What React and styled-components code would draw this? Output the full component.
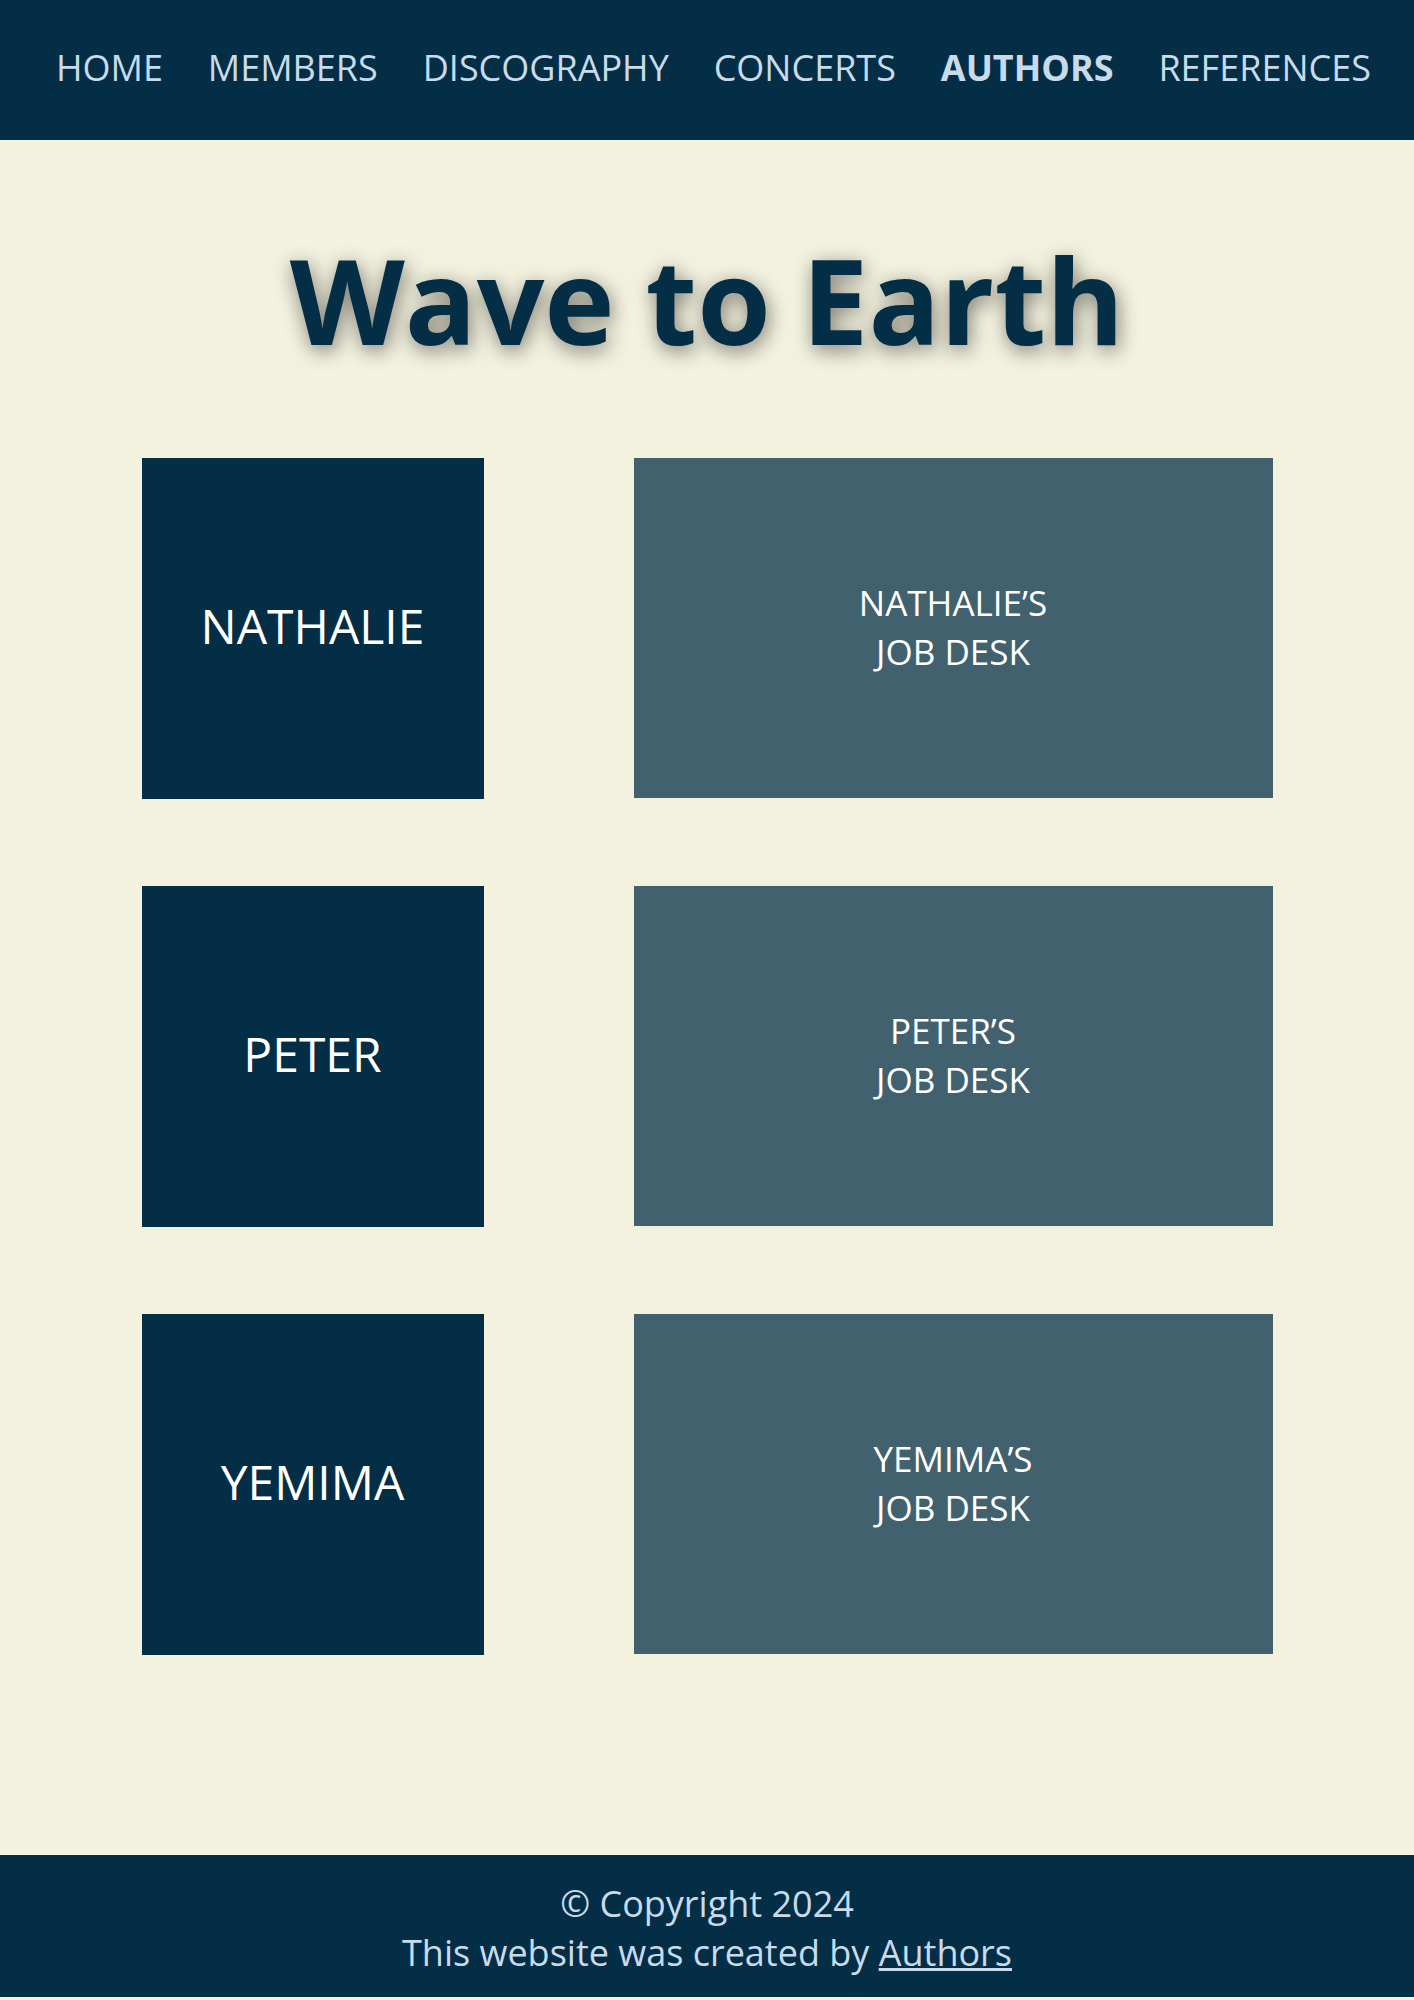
import React from 'react';
import styled, { createGlobalStyle } from 'styled-components';

// Базовые стили страницы

const GlobalStyle = createGlobalStyle`
    * {
        box-sizing: border-box;
    }
    body {
        margin: 0;
        background-color: #f3f2df;
        font-family: "Open Sans", "Noto Sans", sans-serif;
    }
`;

const Nav = styled.nav`
    height: 140px;
    background-color: #032e46;
    display: flex;
    align-items: center;
    justify-content: space-between;
    padding: 0 43px 5px 56px;
`;

const NavLink = styled.a`
    font-size: 36px;
    line-height: 1;
    color: #c9dbea;
    text-decoration: none;
    text-transform: uppercase;
    font-weight: ${props => (props.active ? 700 : 400)};
    cursor: pointer;
`;

const Title = styled.h1`
    margin: 78px 0;
    text-align: center;
    font-size: 119px;
    line-height: 1.362;
    font-weight: 700;
    color: #032e46;
    text-shadow: 2px 5px 20px rgba(0, 0, 0, 0.5);
`;

const Grid = styled.section`
    width: 1131px;
    margin: 0 auto;
    display: grid;
    grid-template-columns: 342px 639px;
    grid-auto-rows: 341px;
    justify-content: space-between;
    row-gap: 87px;
`;

const NameBox = styled.div`
    background-color: #032e46;
    color: #ffffff;
    display: flex;
    align-items: center;
    justify-content: center;
    font-size: 48px;
    padding-bottom: 6px;
`;

const DeskBox = styled.div`
    background-color: #42616e;
    color: #ffffff;
    display: flex;
    align-items: center;
    justify-content: center;
    text-align: center;
    font-size: 35px;
    line-height: 49px;
    height: 340px;
    padding-bottom: 2px;
`;

const Footer = styled.footer`
    margin-top: 200px;
    background-color: #032e46;
    color: #c9dbea;
    text-align: center;
    font-size: 36px;
    line-height: 49px;
    padding: 24px 0 20px;
`;

const FooterLink = styled.a`
    color: #c9dbea;
    text-decoration: underline;
`;

const links = ['Home', 'Members', 'Discography', 'Concerts', 'Authors', 'References'];

const authors = ['Nathalie', 'Peter', 'Yemima'];

export default function App() {
    return (
        <>
            <GlobalStyle />
            <Nav>
                {links.map(link => (
                    <NavLink key={link} active={link === 'Authors' ? 1 : 0}>
                        {link}
                    </NavLink>
                ))}
            </Nav>
            <Title>Wave to Earth</Title>
            <Grid>
                {authors.map(name => (
                    <React.Fragment key={name}>
                        <NameBox>{name.toUpperCase()}</NameBox>
                        <DeskBox>
                            {name.toUpperCase()}’S
                            <br />
                            JOB DESK
                        </DeskBox>
                    </React.Fragment>
                ))}
            </Grid>
            <Footer>
                © Copyright 2024
                <br />
                This website was created by <FooterLink>Authors</FooterLink>
            </Footer>
        </>
    );
}
